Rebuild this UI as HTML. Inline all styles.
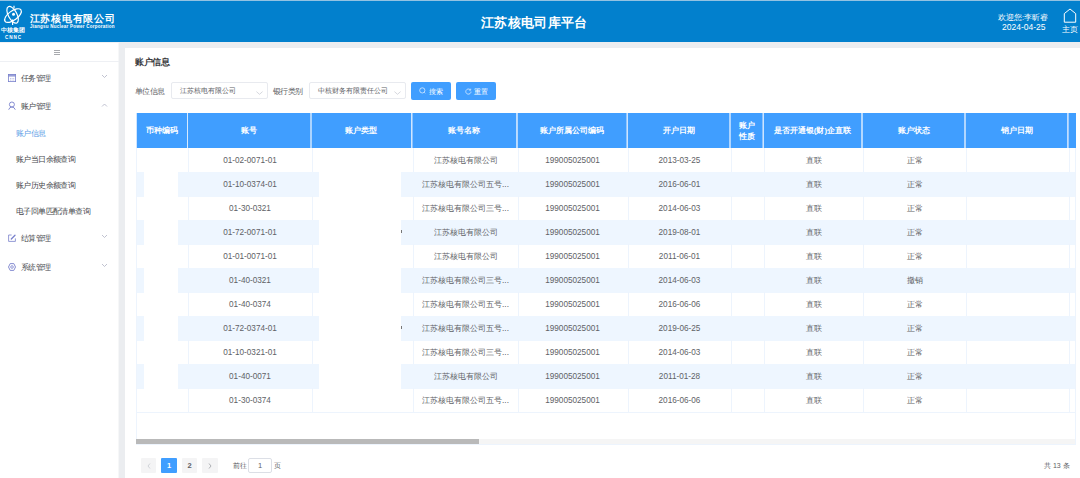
<!DOCTYPE html>
<html><head><meta charset="utf-8">
<style>
*{margin:0;padding:0;box-sizing:border-box;}
html,body{width:1080px;height:478px;overflow:hidden;background:#ebedf0;font-family:"Liberation Sans",sans-serif;position:relative;}
div{position:absolute;}
.t{white-space:nowrap;line-height:1;}
.th{display:flex;align-items:center;justify-content:center;text-align:center;color:#fff;font-weight:bold;font-size:8px;line-height:11px;}
.td{display:flex;align-items:center;justify-content:center;color:#606266;font-size:8.2px;white-space:nowrap;padding-left:2px;}
.mi{left:21px;font-size:8px;letter-spacing:-0.6px;color:#45474c;line-height:1;white-space:nowrap;}
.si{left:16px;font-size:8px;letter-spacing:-0.6px;color:#45474c;line-height:1;white-space:nowrap;}
.sel{top:82px;height:17px;border:1px solid #e8eaef;border-radius:2px;background:#fff;}
.btn{top:82px;height:17.5px;background:#409eff;border-radius:2px;}
svg{position:absolute;overflow:visible;}
</style></head><body>

<div style="left:0;top:0;width:1080px;height:42px;background:#0280cd;"></div>
<div style="left:0;top:0;width:1080px;height:1px;background:#93c2e2;"></div>
<svg style="left:0;top:0" width="30" height="41" viewBox="0 0 30 41">
<g fill="none" stroke="#fff" stroke-width="1.2">
<ellipse cx="12.6" cy="14.8" rx="4.3" ry="9.2" transform="rotate(-28 12.6 14.8)"/>
<ellipse cx="13" cy="15.6" rx="9.8" ry="4.6" transform="rotate(-36 13 15.6)"/>
<path d="M14 5.8 V8.5"/><path d="M12.6 19.5 V25"/>
</g><circle cx="13.5" cy="14.3" r="1.5" fill="#fff"/>
</svg>
<div class="t" style="left:0.5px;top:27.3px;font-size:6px;color:#fff;font-weight:900;letter-spacing:0.3px;">中核集团</div>
<div class="t" style="left:5px;top:35.5px;font-size:4.6px;color:#fff;font-weight:bold;letter-spacing:0.9px;">CNNC</div>
<div class="t" style="left:29.5px;top:13.5px;font-size:10px;color:#fff;font-weight:bold;letter-spacing:0.75px;">江苏核电有限公司</div>
<div class="t" style="left:30px;top:25px;font-size:4.5px;color:#fff;font-weight:bold;letter-spacing:0.25px;">Jiangsu Nuclear Power Corporation</div>
<div class="t" style="left:481px;top:15.5px;font-size:13px;color:#fff;font-weight:bold;letter-spacing:0.35px;">江苏核电司库平台</div>
<div class="t" style="left:998px;top:14px;font-size:7.5px;color:#fff;">欢迎您:李昕睿</div>
<div class="t" style="left:1002px;top:23px;font-size:8.5px;color:#fff;">2024-04-25</div>
<svg style="left:1063px;top:8px" width="14" height="15" viewBox="0 0 14 15"><path d="M1.3 14.2 V5.6 L7 1 L12.7 5.6 V14.2 Z" fill="none" stroke="#fff" stroke-width="1"/></svg>
<div class="t" style="left:1062px;top:26px;font-size:7.7px;color:#fff;">主页</div>
<div style="left:0;top:42px;width:119px;height:436px;background:#fff;"></div>
<div style="left:0;top:42px;width:119px;height:1px;background:#f0f1f4;"></div>
<div style="left:118px;top:43px;width:1px;height:435px;background:#f6f7f8;"></div>
<div style="left:54px;top:50px;width:6px;height:1px;background:#a8aaae;"></div>
<div style="left:54px;top:52px;width:6px;height:1px;background:#a8aaae;"></div>
<div style="left:54px;top:54px;width:6px;height:1px;background:#a8aaae;"></div>
<div style="left:0;top:61px;width:119px;height:1px;background:#eef0f4;"></div>
<svg style="left:8px;top:74px" width="8" height="8" viewBox="0 0 8 8"><rect x="0.4" y="0.4" width="7.2" height="7.2" fill="none" stroke="#7880cc" stroke-width="0.8"/><rect x="0.4" y="0.4" width="7.2" height="2.2" fill="#7880cc" opacity="0.75"/><g fill="#7880cc" opacity="0.45"><rect x="2" y="4" width="1" height="1"/><rect x="3.6" y="4" width="1" height="1"/><rect x="5.2" y="4" width="1" height="1"/><rect x="2" y="5.6" width="1" height="1"/><rect x="3.6" y="5.6" width="1" height="1"/><rect x="5.2" y="5.6" width="1" height="1"/></g></svg>
<div class="mi" style="top:74.5px;">任务管理</div>
<svg style="left:102px;top:74px" width="5" height="5" viewBox="0 0 5 5"><path d="M0 1 L2.5 3.5 L5 1" fill="none" stroke="#b0b3c4" stroke-width="0.8"/></svg>
<svg style="left:8px;top:101px" width="8" height="9" viewBox="0 0 8 9"><circle cx="3.9" cy="3.5" r="2.5" fill="none" stroke="#7880cc" stroke-width="0.9"/><path d="M0.7 8.7 Q1.5 6 3.9 6 Q6.3 6 7.3 8.7" fill="none" stroke="#7880cc" stroke-width="0.9"/></svg>
<div class="mi" style="top:102.5px;">账户管理</div>
<svg style="left:102px;top:103px" width="5" height="5" viewBox="0 0 5 5"><path d="M0 3.5 L2.5 1 L5 3.5" fill="none" stroke="#b0b3c4" stroke-width="0.8"/></svg>
<div class="si" style="top:129.5px;color:#5c9ee6;">账户信息</div>
<div class="si" style="top:155.5px;">账户当日余额查询</div>
<div class="si" style="top:181.5px;">账户历史余额查询</div>
<div class="si" style="top:207.5px;">电子回单匹配清单查询</div>
<svg style="left:8px;top:234px" width="8" height="8" viewBox="0 0 8 8"><path d="M3.6 1 H0.6 V7.4 H7.4 V4.4" fill="none" stroke="#7880cc" stroke-width="0.8"/><path d="M3.3 5 L7 1.3" stroke="#7880cc" stroke-width="1.3" stroke-linecap="round"/></svg>
<div class="mi" style="top:234.5px;">结算管理</div>
<svg style="left:102px;top:234px" width="5" height="5" viewBox="0 0 5 5"><path d="M0 1 L2.5 3.5 L5 1" fill="none" stroke="#b0b3c4" stroke-width="0.8"/></svg>
<svg style="left:8px;top:263px" width="8" height="8" viewBox="0 0 8 8"><path d="M2.2 0.6 H5.8 L7.5 4 L5.8 7.4 H2.2 L0.5 4 Z" fill="none" stroke="#7880cc" stroke-width="0.9" stroke-linejoin="round"/><circle cx="4" cy="4" r="1.3" fill="none" stroke="#7880cc" stroke-width="0.8"/></svg>
<div class="mi" style="top:263.5px;">系统管理</div>
<svg style="left:102px;top:263px" width="5" height="5" viewBox="0 0 5 5"><path d="M0 1 L2.5 3.5 L5 1" fill="none" stroke="#b0b3c4" stroke-width="0.8"/></svg>
<div style="left:125px;top:48px;width:955px;height:430px;background:#fff;"></div>
<div class="t" style="left:135px;top:57.5px;font-size:9px;letter-spacing:-0.4px;color:#3a3b3e;font-weight:bold;">账户信息</div>
<div class="t" style="left:135px;top:87.5px;font-size:8px;letter-spacing:-0.6px;color:#606266;">单位信息</div>
<div class="sel" style="left:171px;width:97px;"></div>
<div class="t" style="left:180px;top:87px;font-size:7px;color:#606266;">江苏核电有限公司</div>
<svg style="left:256px;top:90.5px" width="7" height="4" viewBox="0 0 7 4"><path d="M0.4 0.6 L3.5 3.3 L6.6 0.6" fill="none" stroke="#c4c7d0" stroke-width="0.7"/></svg>
<div class="t" style="left:273px;top:87.5px;font-size:8px;letter-spacing:-0.6px;color:#606266;">银行类别</div>
<div class="sel" style="left:309px;width:97px;"></div>
<div class="t" style="left:318px;top:87px;font-size:7px;color:#606266;">中核财务有限责任公司</div>
<svg style="left:394px;top:90.5px" width="7" height="4" viewBox="0 0 7 4"><path d="M0.4 0.6 L3.5 3.3 L6.6 0.6" fill="none" stroke="#c4c7d0" stroke-width="0.7"/></svg>
<div class="btn" style="left:411px;width:40px;"></div>
<svg style="left:419px;top:87px" width="7" height="7" viewBox="0 0 7 7"><circle cx="3.3" cy="3.4" r="2.6" fill="none" stroke="#fff" stroke-width="0.7" opacity="0.9"/><line x1="5.2" y1="5.3" x2="6.2" y2="6.3" stroke="#fff" stroke-width="0.7" opacity="0.9"/></svg>
<div class="t" style="left:428.5px;top:87.5px;font-size:7px;color:#fff;">搜索</div>
<div class="btn" style="left:456px;width:40px;"></div>
<svg style="left:464.5px;top:87.5px" width="7" height="7" viewBox="0 0 7 7"><path d="M6 3.6 A2.6 2.6 0 1 1 5.1 1.6" fill="none" stroke="#fff" stroke-width="0.7" opacity="0.9"/><path d="M5.7 0.7 V2.2 H4.2" fill="none" stroke="#fff" stroke-width="0.7" opacity="0.9"/></svg>
<div class="t" style="left:473.5px;top:87.5px;font-size:7px;color:#fff;">重置</div>
<div style="left:136px;top:113px;width:940px;height:35px;background:#409eff;"></div>
<div style="left:136px;top:113px;width:1px;height:35px;background:#cfe5ff;"></div>
<div class="th" style="left:136px;top:113px;width:51px;height:35px;">币种编码</div>
<div style="left:187px;top:113px;width:1px;height:35px;background:#d6eaff;"></div>
<div class="th" style="left:187px;top:113px;width:124px;height:35px;">账号</div>
<div style="left:310px;top:113px;width:1px;height:35px;background:#abd4ff;"></div>
<div style="left:311px;top:113px;width:1px;height:35px;background:#abd4ff;"></div>
<div class="th" style="left:311px;top:113px;width:100px;height:35px;">账户类型</div>
<div style="left:411px;top:113px;width:1px;height:35px;background:#d0e6ff;"></div>
<div style="left:412px;top:113px;width:1px;height:35px;background:#8ec4ff;"></div>
<div class="th" style="left:411px;top:113px;width:105px;height:35px;">账号名称</div>
<div style="left:516px;top:113px;width:1px;height:35px;background:#bcdcff;"></div>
<div style="left:517px;top:113px;width:1px;height:35px;background:#b4d8ff;"></div>
<div class="th" style="left:516px;top:113px;width:111px;height:35px;">账户所属公司编码</div>
<div style="left:626px;top:113px;width:1px;height:35px;background:#90c6ff;"></div>
<div style="left:627px;top:113px;width:1px;height:35px;background:#cde4ff;"></div>
<div class="th" style="left:627px;top:113px;width:103px;height:35px;">开户日期</div>
<div style="left:729px;top:113px;width:1px;height:35px;background:#aed5ff;"></div>
<div style="left:730px;top:113px;width:1px;height:35px;background:#aed5ff;"></div>
<div class="th" style="left:730px;top:113px;width:33px;height:35px;">账户<br>性质</div>
<div style="left:762px;top:113px;width:1px;height:35px;background:#8ec4ff;"></div>
<div style="left:763px;top:113px;width:1px;height:35px;background:#cde4ff;"></div>
<div class="th" style="left:763px;top:113px;width:99px;height:35px;">是否开通银(财)企直联</div>
<div style="left:861px;top:113px;width:1px;height:35px;background:#b3d8ff;"></div>
<div style="left:862px;top:113px;width:1px;height:35px;background:#b3d8ff;"></div>
<div class="th" style="left:862px;top:113px;width:103px;height:35px;">账户状态</div>
<div style="left:964px;top:113px;width:1px;height:35px;background:#b0d6ff;"></div>
<div style="left:965px;top:113px;width:1px;height:35px;background:#b0d6ff;"></div>
<div class="th" style="left:965px;top:113px;width:103px;height:35px;">销户日期</div>
<div style="left:1067px;top:113px;width:1px;height:35px;background:#c0ddff;"></div>
<div style="left:1068px;top:113px;width:1px;height:35px;background:#a0cdff;"></div>
<div style="left:188px;top:148px;width:1px;height:24px;background:#edf4fd;"></div>
<div style="left:312px;top:148px;width:1px;height:24px;background:#edf4fd;"></div>
<div style="left:413px;top:148px;width:1px;height:24px;background:#edf4fd;"></div>
<div style="left:518px;top:148px;width:1px;height:24px;background:#edf4fd;"></div>
<div style="left:628px;top:148px;width:1px;height:24px;background:#edf4fd;"></div>
<div style="left:731px;top:148px;width:1px;height:24px;background:#edf4fd;"></div>
<div style="left:764px;top:148px;width:1px;height:24px;background:#edf4fd;"></div>
<div style="left:863px;top:148px;width:1px;height:24px;background:#edf4fd;"></div>
<div style="left:966px;top:148px;width:1px;height:24px;background:#edf4fd;"></div>
<div style="left:1069px;top:148px;width:1px;height:24px;background:#edf4fd;"></div>
<div class="td" style="left:187px;top:148px;width:124px;height:24px;padding-left:2px;">01-02-0071-01</div>
<div class="td" style="left:411px;top:148px;width:105px;height:24px;padding-left:4px;">江苏核电有限公司</div>
<div class="td" style="left:516px;top:148px;width:111px;height:24px;padding-left:2px;">199005025001</div>
<div class="td" style="left:627px;top:148px;width:103px;height:24px;padding-left:2px;">2013-03-25</div>
<div class="td" style="left:763px;top:148px;width:99px;height:24px;padding-left:2px;">直联</div>
<div class="td" style="left:862px;top:148px;width:103px;height:24px;padding-left:2px;">正常</div>
<div style="left:136px;top:172px;width:940px;height:25px;background:#eef6ff;"></div>
<div style="left:144px;top:172px;width:34px;height:25px;background:#fff;"></div>
<div style="left:319px;top:172px;width:82px;height:25px;background:#fff;"></div>
<div class="td" style="left:187px;top:172px;width:124px;height:24px;padding-left:2px;">01-10-0374-01</div>
<div class="td" style="left:411px;top:172px;width:105px;height:24px;padding-left:4px;">江苏核电有限公司五号...</div>
<div class="td" style="left:516px;top:172px;width:111px;height:24px;padding-left:2px;">199005025001</div>
<div class="td" style="left:627px;top:172px;width:103px;height:24px;padding-left:2px;">2016-06-01</div>
<div class="td" style="left:763px;top:172px;width:99px;height:24px;padding-left:2px;">直联</div>
<div class="td" style="left:862px;top:172px;width:103px;height:24px;padding-left:2px;">正常</div>
<div style="left:188px;top:196px;width:1px;height:24px;background:#edf4fd;"></div>
<div style="left:312px;top:196px;width:1px;height:24px;background:#edf4fd;"></div>
<div style="left:413px;top:196px;width:1px;height:24px;background:#edf4fd;"></div>
<div style="left:518px;top:196px;width:1px;height:24px;background:#edf4fd;"></div>
<div style="left:628px;top:196px;width:1px;height:24px;background:#edf4fd;"></div>
<div style="left:731px;top:196px;width:1px;height:24px;background:#edf4fd;"></div>
<div style="left:764px;top:196px;width:1px;height:24px;background:#edf4fd;"></div>
<div style="left:863px;top:196px;width:1px;height:24px;background:#edf4fd;"></div>
<div style="left:966px;top:196px;width:1px;height:24px;background:#edf4fd;"></div>
<div style="left:1069px;top:196px;width:1px;height:24px;background:#edf4fd;"></div>
<div class="td" style="left:187px;top:196px;width:124px;height:24px;padding-left:2px;">01-30-0321</div>
<div class="td" style="left:411px;top:196px;width:105px;height:24px;padding-left:4px;">江苏核电有限公司三号...</div>
<div class="td" style="left:516px;top:196px;width:111px;height:24px;padding-left:2px;">199005025001</div>
<div class="td" style="left:627px;top:196px;width:103px;height:24px;padding-left:2px;">2014-06-03</div>
<div class="td" style="left:763px;top:196px;width:99px;height:24px;padding-left:2px;">直联</div>
<div class="td" style="left:862px;top:196px;width:103px;height:24px;padding-left:2px;">正常</div>
<div style="left:136px;top:220px;width:940px;height:25px;background:#eef6ff;"></div>
<div style="left:144px;top:220px;width:34px;height:25px;background:#fff;"></div>
<div style="left:319px;top:220px;width:82px;height:25px;background:#fff;"></div>
<div style="left:401px;top:229.5px;width:1px;height:3.5px;background:#777;"></div>
<div class="td" style="left:187px;top:220px;width:124px;height:24px;padding-left:2px;">01-72-0071-01</div>
<div class="td" style="left:411px;top:220px;width:105px;height:24px;padding-left:4px;">江苏核电有限公司</div>
<div class="td" style="left:516px;top:220px;width:111px;height:24px;padding-left:2px;">199005025001</div>
<div class="td" style="left:627px;top:220px;width:103px;height:24px;padding-left:2px;">2019-08-01</div>
<div class="td" style="left:763px;top:220px;width:99px;height:24px;padding-left:2px;">直联</div>
<div class="td" style="left:862px;top:220px;width:103px;height:24px;padding-left:2px;">正常</div>
<div style="left:188px;top:244px;width:1px;height:24px;background:#edf4fd;"></div>
<div style="left:312px;top:244px;width:1px;height:24px;background:#edf4fd;"></div>
<div style="left:413px;top:244px;width:1px;height:24px;background:#edf4fd;"></div>
<div style="left:518px;top:244px;width:1px;height:24px;background:#edf4fd;"></div>
<div style="left:628px;top:244px;width:1px;height:24px;background:#edf4fd;"></div>
<div style="left:731px;top:244px;width:1px;height:24px;background:#edf4fd;"></div>
<div style="left:764px;top:244px;width:1px;height:24px;background:#edf4fd;"></div>
<div style="left:863px;top:244px;width:1px;height:24px;background:#edf4fd;"></div>
<div style="left:966px;top:244px;width:1px;height:24px;background:#edf4fd;"></div>
<div style="left:1069px;top:244px;width:1px;height:24px;background:#edf4fd;"></div>
<div class="td" style="left:187px;top:244px;width:124px;height:24px;padding-left:2px;">01-01-0071-01</div>
<div class="td" style="left:411px;top:244px;width:105px;height:24px;padding-left:4px;">江苏核电有限公司</div>
<div class="td" style="left:516px;top:244px;width:111px;height:24px;padding-left:2px;">199005025001</div>
<div class="td" style="left:627px;top:244px;width:103px;height:24px;padding-left:2px;">2011-06-01</div>
<div class="td" style="left:763px;top:244px;width:99px;height:24px;padding-left:2px;">直联</div>
<div class="td" style="left:862px;top:244px;width:103px;height:24px;padding-left:2px;">正常</div>
<div style="left:136px;top:268px;width:940px;height:25px;background:#eef6ff;"></div>
<div style="left:144px;top:268px;width:34px;height:25px;background:#fff;"></div>
<div style="left:319px;top:268px;width:82px;height:25px;background:#fff;"></div>
<div class="td" style="left:187px;top:268px;width:124px;height:24px;padding-left:2px;">01-40-0321</div>
<div class="td" style="left:411px;top:268px;width:105px;height:24px;padding-left:4px;">江苏核电有限公司三号...</div>
<div class="td" style="left:516px;top:268px;width:111px;height:24px;padding-left:2px;">199005025001</div>
<div class="td" style="left:627px;top:268px;width:103px;height:24px;padding-left:2px;">2014-06-03</div>
<div class="td" style="left:763px;top:268px;width:99px;height:24px;padding-left:2px;">直联</div>
<div class="td" style="left:862px;top:268px;width:103px;height:24px;padding-left:2px;">撤销</div>
<div style="left:188px;top:292px;width:1px;height:24px;background:#edf4fd;"></div>
<div style="left:312px;top:292px;width:1px;height:24px;background:#edf4fd;"></div>
<div style="left:413px;top:292px;width:1px;height:24px;background:#edf4fd;"></div>
<div style="left:518px;top:292px;width:1px;height:24px;background:#edf4fd;"></div>
<div style="left:628px;top:292px;width:1px;height:24px;background:#edf4fd;"></div>
<div style="left:731px;top:292px;width:1px;height:24px;background:#edf4fd;"></div>
<div style="left:764px;top:292px;width:1px;height:24px;background:#edf4fd;"></div>
<div style="left:863px;top:292px;width:1px;height:24px;background:#edf4fd;"></div>
<div style="left:966px;top:292px;width:1px;height:24px;background:#edf4fd;"></div>
<div style="left:1069px;top:292px;width:1px;height:24px;background:#edf4fd;"></div>
<div class="td" style="left:187px;top:292px;width:124px;height:24px;padding-left:2px;">01-40-0374</div>
<div class="td" style="left:411px;top:292px;width:105px;height:24px;padding-left:4px;">江苏核电有限公司五号...</div>
<div class="td" style="left:516px;top:292px;width:111px;height:24px;padding-left:2px;">199005025001</div>
<div class="td" style="left:627px;top:292px;width:103px;height:24px;padding-left:2px;">2016-06-06</div>
<div class="td" style="left:763px;top:292px;width:99px;height:24px;padding-left:2px;">直联</div>
<div class="td" style="left:862px;top:292px;width:103px;height:24px;padding-left:2px;">正常</div>
<div style="left:136px;top:316px;width:940px;height:25px;background:#eef6ff;"></div>
<div style="left:144px;top:316px;width:34px;height:25px;background:#fff;"></div>
<div style="left:319px;top:316px;width:82px;height:25px;background:#fff;"></div>
<div style="left:401px;top:325.5px;width:1px;height:3.5px;background:#777;"></div>
<div class="td" style="left:187px;top:316px;width:124px;height:24px;padding-left:2px;">01-72-0374-01</div>
<div class="td" style="left:411px;top:316px;width:105px;height:24px;padding-left:4px;">江苏核电有限公司五号...</div>
<div class="td" style="left:516px;top:316px;width:111px;height:24px;padding-left:2px;">199005025001</div>
<div class="td" style="left:627px;top:316px;width:103px;height:24px;padding-left:2px;">2019-06-25</div>
<div class="td" style="left:763px;top:316px;width:99px;height:24px;padding-left:2px;">直联</div>
<div class="td" style="left:862px;top:316px;width:103px;height:24px;padding-left:2px;">正常</div>
<div style="left:188px;top:340px;width:1px;height:24px;background:#edf4fd;"></div>
<div style="left:312px;top:340px;width:1px;height:24px;background:#edf4fd;"></div>
<div style="left:413px;top:340px;width:1px;height:24px;background:#edf4fd;"></div>
<div style="left:518px;top:340px;width:1px;height:24px;background:#edf4fd;"></div>
<div style="left:628px;top:340px;width:1px;height:24px;background:#edf4fd;"></div>
<div style="left:731px;top:340px;width:1px;height:24px;background:#edf4fd;"></div>
<div style="left:764px;top:340px;width:1px;height:24px;background:#edf4fd;"></div>
<div style="left:863px;top:340px;width:1px;height:24px;background:#edf4fd;"></div>
<div style="left:966px;top:340px;width:1px;height:24px;background:#edf4fd;"></div>
<div style="left:1069px;top:340px;width:1px;height:24px;background:#edf4fd;"></div>
<div class="td" style="left:187px;top:340px;width:124px;height:24px;padding-left:2px;">01-10-0321-01</div>
<div class="td" style="left:411px;top:340px;width:105px;height:24px;padding-left:4px;">江苏核电有限公司三号...</div>
<div class="td" style="left:516px;top:340px;width:111px;height:24px;padding-left:2px;">199005025001</div>
<div class="td" style="left:627px;top:340px;width:103px;height:24px;padding-left:2px;">2014-06-03</div>
<div class="td" style="left:763px;top:340px;width:99px;height:24px;padding-left:2px;">直联</div>
<div class="td" style="left:862px;top:340px;width:103px;height:24px;padding-left:2px;">正常</div>
<div style="left:136px;top:364px;width:940px;height:25px;background:#eef6ff;"></div>
<div style="left:144px;top:364px;width:34px;height:25px;background:#fff;"></div>
<div style="left:319px;top:364px;width:82px;height:25px;background:#fff;"></div>
<div class="td" style="left:187px;top:364px;width:124px;height:24px;padding-left:2px;">01-40-0071</div>
<div class="td" style="left:411px;top:364px;width:105px;height:24px;padding-left:4px;">江苏核电有限公司</div>
<div class="td" style="left:516px;top:364px;width:111px;height:24px;padding-left:2px;">199005025001</div>
<div class="td" style="left:627px;top:364px;width:103px;height:24px;padding-left:2px;">2011-01-28</div>
<div class="td" style="left:763px;top:364px;width:99px;height:24px;padding-left:2px;">直联</div>
<div class="td" style="left:862px;top:364px;width:103px;height:24px;padding-left:2px;">正常</div>
<div style="left:188px;top:388px;width:1px;height:24px;background:#edf4fd;"></div>
<div style="left:312px;top:388px;width:1px;height:24px;background:#edf4fd;"></div>
<div style="left:413px;top:388px;width:1px;height:24px;background:#edf4fd;"></div>
<div style="left:518px;top:388px;width:1px;height:24px;background:#edf4fd;"></div>
<div style="left:628px;top:388px;width:1px;height:24px;background:#edf4fd;"></div>
<div style="left:731px;top:388px;width:1px;height:24px;background:#edf4fd;"></div>
<div style="left:764px;top:388px;width:1px;height:24px;background:#edf4fd;"></div>
<div style="left:863px;top:388px;width:1px;height:24px;background:#edf4fd;"></div>
<div style="left:966px;top:388px;width:1px;height:24px;background:#edf4fd;"></div>
<div style="left:1069px;top:388px;width:1px;height:24px;background:#edf4fd;"></div>
<div class="td" style="left:187px;top:388px;width:124px;height:24px;padding-left:2px;">01-30-0374</div>
<div class="td" style="left:411px;top:388px;width:105px;height:24px;padding-left:4px;">江苏核电有限公司五号...</div>
<div class="td" style="left:516px;top:388px;width:111px;height:24px;padding-left:2px;">199005025001</div>
<div class="td" style="left:627px;top:388px;width:103px;height:24px;padding-left:2px;">2016-06-06</div>
<div class="td" style="left:763px;top:388px;width:99px;height:24px;padding-left:2px;">直联</div>
<div class="td" style="left:862px;top:388px;width:103px;height:24px;padding-left:2px;">正常</div>
<div style="left:136px;top:148px;width:1px;height:291px;background:#edf4fd;"></div>
<div style="left:1075px;top:148px;width:1px;height:297px;background:#edf4fd;"></div>
<div style="left:136px;top:412px;width:940px;height:1px;background:#edf4fd;"></div>
<div style="left:136px;top:439px;width:939px;height:5px;background:#f5f5f5;"></div>
<div style="left:136px;top:439px;width:343px;height:5px;background:#b9b9b9;"></div>
<div style="left:136px;top:444px;width:939px;height:1px;background:#edf4fd;"></div>
<div style="left:141px;top:458px;width:15px;height:15px;background:#f4f4f5;border-radius:1px;"></div>
<svg style="left:147px;top:463px" width="4" height="6" viewBox="0 0 4 6"><path d="M3 0.5 L1 3 L3 5.5" fill="none" stroke="#c0c4cc" stroke-width="0.7"/></svg>
<div style="left:161px;top:458px;width:16px;height:15px;background:#409eff;color:#fff;font-size:7.5px;font-weight:bold;display:flex;align-items:center;justify-content:center;border-radius:1px;">1</div>
<div style="left:182px;top:458px;width:15px;height:15px;background:#f4f4f5;color:#606266;font-size:7.5px;font-weight:bold;display:flex;align-items:center;justify-content:center;border-radius:1px;">2</div>
<div style="left:202px;top:458px;width:16px;height:15px;background:#f4f4f5;border-radius:1px;"></div>
<svg style="left:208px;top:463px" width="4" height="6" viewBox="0 0 4 6"><path d="M1 0.5 L3 3 L1 5.5" fill="none" stroke="#909399" stroke-width="0.7"/></svg>
<div class="t" style="left:233px;top:462px;font-size:7px;color:#606266;">前往</div>
<div style="left:248px;top:458px;width:24px;height:15px;border:1px solid #dcdfe6;border-radius:2px;color:#606266;font-size:7.5px;display:flex;align-items:center;justify-content:center;">1</div>
<div class="t" style="left:274px;top:462px;font-size:7px;color:#606266;">页</div>
<div class="t" style="left:1044px;top:462px;font-size:7px;color:#606266;">共 13 条</div>
</body></html>
